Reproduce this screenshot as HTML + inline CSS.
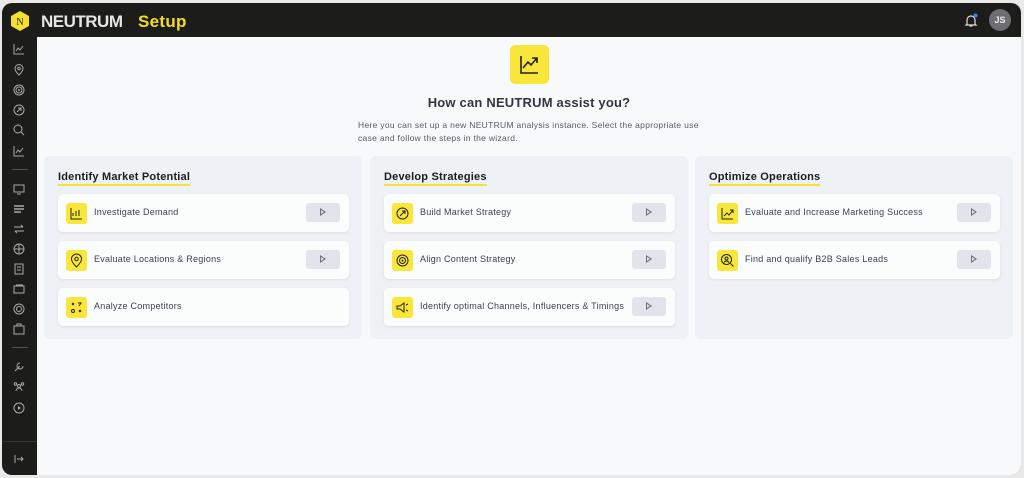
<!DOCTYPE html>
<html><head><meta charset="utf-8"><style>
*{box-sizing:border-box;margin:0;padding:0}
body{width:1024px;height:478px;background:#e9e9ea;font-family:"Liberation Sans",sans-serif;overflow:hidden;position:relative}
.win{position:absolute;left:2px;top:3px;width:1019px;height:472px;background:#1c1c1b;border-radius:10px;overflow:hidden}
.main{position:absolute;left:35px;top:34px;right:0;bottom:0;background:#f8f9fa}
.logo{position:absolute;left:9px;top:8px;width:18px;height:20px}
.brand{position:absolute;left:39px;top:9px;color:#e6e6e6;font-weight:bold;font-size:17px;letter-spacing:-0.5px}
.setup{position:absolute;left:136px;top:9px;color:#f3dd2c;font-weight:bold;font-size:17px;letter-spacing:0.3px}
.av{position:absolute;left:987px;top:6px;width:22px;height:22px;border-radius:50%;background:#6e6e72;color:#eee;font-size:9px;font-weight:bold;text-align:center;line-height:22px}
.side svg{position:absolute;left:11px;width:12px;height:12px}
.sep{position:absolute;left:10px;width:16px;height:1px;background:#555}
.col{position:absolute;top:119px;width:318px;height:183px;background:#eef1f5;border-radius:6px}
.col h3{position:absolute;left:14px;top:15px;font-size:11px;font-weight:bold;color:#1d1d1d;border-bottom:2px solid #f4e13a;padding-bottom:1px;letter-spacing:0.2px}
.card{position:absolute;left:14px;width:291px;height:38px;background:#fbfcfc;border-radius:5px;box-shadow:0 1px 3px rgba(0,0,0,.08)}
.ic{position:absolute;left:8px;top:9px;width:21px;height:21px;background:#f9e63b;border-radius:3px}
.ic svg{position:absolute;left:3px;top:3px;width:15px;height:15px}
.card span{position:absolute;left:36px;top:13px;font-size:9px;color:#3b4250;letter-spacing:0.25px}
.pl{position:absolute;left:248px;top:9px;width:34px;height:19px;background:#e1e5eb;border-radius:3px}
.pl:after{content:"";position:absolute;left:14px;top:5px;width:0;height:0;border-left:6px solid #6b7280;border-top:4.5px solid transparent;border-bottom:4.5px solid transparent}
.pl:before{content:"";position:absolute;left:15px;top:7px;width:0;height:0;border-left:3px solid #e1e5eb;border-top:2.5px solid transparent;border-bottom:2.5px solid transparent;z-index:2}
</style></head><body>
<div class="win">
<svg class="logo" viewBox="0 0 18 20"><polygon points="9,0 18,5 18,15 9,20 0,15 0,5" fill="#f4df2c"/><text x="9" y="14" font-size="10" text-anchor="middle" font-family="Liberation Serif" fill="#222">N</text></svg>
<div class="brand">NEUTRUM</div><div class="setup">Setup</div>
<svg style="position:absolute;left:962px;top:10px" width="14" height="15" viewBox="0 0 14 15"><path d="M3 11V7a4 4 0 0 1 8 0v4l1 1H2z M5.5 13h3" stroke="#ddd" stroke-width="1.2" fill="none"/><circle cx="11.5" cy="2.5" r="2" fill="#3b82f6"/></svg>
<div class="av">JS</div>
<div class="side">
<svg style="top:40px" viewBox="0 0 12 12"><path d="M1 1v10h10M3 8l2-3 2 2 3-4" stroke="#aaa" fill="none"/></svg>
<svg style="top:61px" viewBox="0 0 12 12"><path d="M6 11s-4-4-4-6.5a4 4 0 0 1 8 0C10 7 6 11 6 11z" stroke="#aaa" fill="none"/><circle cx="6" cy="4.5" r="1.3" stroke="#aaa" fill="none"/></svg>
<svg style="top:81px" viewBox="0 0 12 12"><circle cx="6" cy="6" r="5" stroke="#aaa" fill="none"/><circle cx="6" cy="6" r="3" stroke="#aaa" fill="none"/><circle cx="6" cy="6" r="1" fill="#aaa"/></svg>
<svg style="top:101px" viewBox="0 0 12 12"><circle cx="6" cy="6" r="5" stroke="#aaa" fill="none"/><path d="M4 8l4-4M5 4h3v3" stroke="#aaa" fill="none"/></svg>
<svg style="top:121px" viewBox="0 0 12 12"><circle cx="5" cy="5" r="4" stroke="#aaa" fill="none"/><path d="M8 8l3 3" stroke="#aaa"/></svg>
<svg style="top:142px" viewBox="0 0 12 12"><path d="M1 1v10h10M3 8l2-3 2 2 3-4" stroke="#aaa" fill="none"/></svg>
<div class="sep" style="top:166px"></div>
<svg style="top:180px" viewBox="0 0 12 12"><rect x="1" y="2" width="10" height="7" stroke="#aaa" fill="none"/><path d="M4 11h4" stroke="#aaa"/></svg>
<svg style="top:200px" viewBox="0 0 12 12"><path d="M1 3h10M1 6h10M1 9h7" stroke="#aaa" stroke-width="1.4"/></svg>
<svg style="top:220px" viewBox="0 0 12 12"><path d="M1 4h9M8 2l2 2M11 8H2M4 10L2 8" stroke="#aaa" fill="none"/></svg>
<svg style="top:240px" viewBox="0 0 12 12"><circle cx="6" cy="6" r="5" stroke="#aaa" fill="none"/><path d="M1 6h10M6 1v10" stroke="#aaa"/></svg>
<svg style="top:260px" viewBox="0 0 12 12"><rect x="2" y="1" width="8" height="10" stroke="#aaa" fill="none"/><path d="M4 4h4M4 7h4" stroke="#aaa"/></svg>
<svg style="top:280px" viewBox="0 0 12 12"><rect x="1" y="3" width="10" height="7" stroke="#aaa" fill="none"/><path d="M3 2h7" stroke="#aaa"/></svg>
<svg style="top:300px" viewBox="0 0 12 12"><circle cx="6" cy="6" r="5" stroke="#aaa" fill="none"/><circle cx="6" cy="6" r="2.5" stroke="#aaa" fill="none"/></svg>
<svg style="top:320px" viewBox="0 0 12 12"><rect x="1" y="3" width="10" height="8" stroke="#aaa" fill="none"/><path d="M4 3V1h4v2" stroke="#aaa" fill="none"/></svg>
<div class="sep" style="top:344px"></div>
<svg style="top:358px" viewBox="0 0 12 12"><path d="M2 10l5-5M7 2a3 3 0 1 0 3 3" stroke="#aaa" fill="none"/></svg>
<svg style="top:378px" viewBox="0 0 12 12"><circle cx="6" cy="5" r="1.5" stroke="#aaa" fill="none"/><circle cx="2.5" cy="3" r="1.2" stroke="#aaa" fill="none"/><circle cx="9.5" cy="3" r="1.2" stroke="#aaa" fill="none"/><path d="M3 10a3 3 0 0 1 6 0" stroke="#aaa" fill="none"/></svg>
<svg style="top:399px" viewBox="0 0 12 12"><circle cx="6" cy="6" r="5" stroke="#aaa" fill="none"/><path d="M5 4v4l3-2z" fill="#aaa"/></svg>
<div style="position:absolute;left:0;top:438px;width:35px;height:1px;background:#333"></div>
<svg style="top:450px" viewBox="0 0 12 12"><path d="M2 2v8M4 6h6M8 4l2 2-2 2" stroke="#aaa" fill="none"/></svg>
</div>
<div class="main">
<div style="position:absolute;left:473px;top:8px;width:39px;height:39px;background:#f9e63b;border-radius:5px"><svg style="position:absolute;left:9px;top:9px" width="21" height="21" viewBox="0 0 21 21"><path d="M2 2v17h17M4 14l5-6 3 3 6-7M13 4h5v5" stroke="#222" stroke-width="1.6" fill="none"/></svg></div>
<div style="position:absolute;left:0;right:0;top:58px;text-align:center;font-size:13px;font-weight:bold;color:#2f3543;letter-spacing:0.2px">How can NEUTRUM assist you?</div>
<div style="position:absolute;left:321px;top:82px;width:360px;font-size:8.5px;line-height:13px;color:#555b66;letter-spacing:0.3px">Here you can set up a new NEUTRUM analysis instance. Select the appropriate use case and follow the steps in the wizard.</div>

<div class="col" style="left:7px"><h3>Identify Market Potential</h3>
<div class="card" style="top:38px"><div class="ic"><svg viewBox="0 0 15 15"><path d="M2 2v11h11M4 10V7M7 10V5M10 10V4" stroke="#222" fill="none"/></svg></div><span>Investigate Demand</span><div class="pl"></div></div>
<div class="card" style="top:85px"><div class="ic"><svg viewBox="0 0 15 15"><path d="M7.5 14s-5-5-5-8a5 5 0 0 1 10 0c0 3-5 8-5 8z" stroke="#222" fill="none"/><circle cx="7.5" cy="6" r="1.7" stroke="#222" fill="none"/></svg></div><span>Evaluate Locations &amp; Regions</span><div class="pl"></div></div>
<div class="card" style="top:132px"><div class="ic"><svg viewBox="0 0 15 15"><circle cx="4" cy="11" r="1.5" stroke="#222" fill="none"/><path d="M3 3l2 2M5 3L3 5M10 10l2 2M12 10l-2 2M9 3h3l-2 3" stroke="#222" fill="none"/></svg></div><span>Analyze Competitors</span></div>
</div>

<div class="col" style="left:333px"><h3>Develop Strategies</h3>
<div class="card" style="top:38px"><div class="ic"><svg viewBox="0 0 15 15"><circle cx="7.5" cy="7.5" r="5.5" stroke="#222" fill="none"/><path d="M5 10l5-5M7 5h3v3" stroke="#222" fill="none"/></svg></div><span>Build Market Strategy</span><div class="pl"></div></div>
<div class="card" style="top:85px"><div class="ic"><svg viewBox="0 0 15 15"><circle cx="7.5" cy="7.5" r="5.5" stroke="#222" fill="none"/><circle cx="7.5" cy="7.5" r="3" stroke="#222" fill="none"/><circle cx="7.5" cy="7.5" r="1" fill="#222"/></svg></div><span>Align Content Strategy</span><div class="pl"></div></div>
<div class="card" style="top:132px"><div class="ic"><svg viewBox="0 0 15 15"><path d="M2 6h3l4-3v9L5 9H2z M11 5l2-1M11 10l2 1" stroke="#222" fill="none"/></svg></div><span>Identify optimal Channels, Influencers &amp; Timings</span><div class="pl"></div></div>
</div>

<div class="col" style="left:658px"><h3>Optimize Operations</h3>
<div class="card" style="top:38px"><div class="ic"><svg viewBox="0 0 15 15"><path d="M2 2v11h11M4 10l3-3 2 2 4-5M10 4h3v3" stroke="#222" fill="none"/></svg></div><span>Evaluate and Increase Marketing Success</span><div class="pl"></div></div>
<div class="card" style="top:85px"><div class="ic"><svg viewBox="0 0 15 15"><circle cx="6.5" cy="6.5" r="5" stroke="#222" fill="none"/><circle cx="6.5" cy="5.5" r="1.5" stroke="#222" fill="none"/><path d="M4 9.5a3 3 0 0 1 5 0M10.5 10.5l3 3" stroke="#222" fill="none"/></svg></div><span>Find and qualify B2B Sales Leads</span><div class="pl"></div></div>
</div>
</div>
</div>
</body></html>
